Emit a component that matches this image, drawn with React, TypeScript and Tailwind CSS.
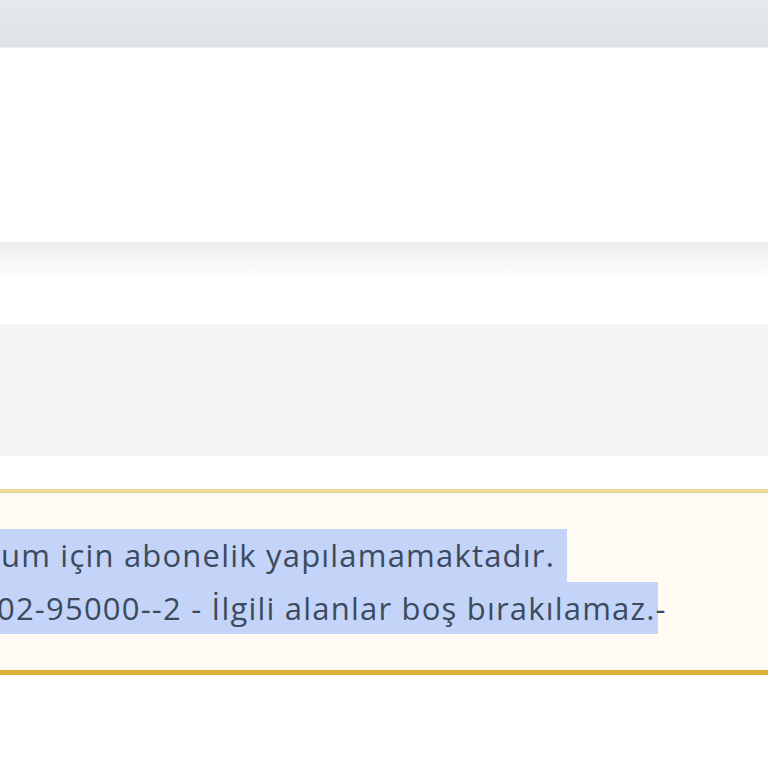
export default function App() {
  return (
    <div className="w-[768px] h-[768px] overflow-hidden bg-white flex flex-col" style={{ fontFamily: '"Open Sans", "Noto Sans", sans-serif' }}>
      {/* top bar */}
      <div className="h-[48px] shrink-0 bg-gradient-to-b from-[#e6e9ec] to-[#dee2e5] border-b border-[#eceef0]" />

      {/* white panel */}
      <div className="h-[194px] shrink-0 bg-white" />

      {/* shadow band */}
      <div className="h-[38px] shrink-0 bg-gradient-to-b from-[#ebebeb] via-[#f7f7f7] to-white" />
      <div className="h-[44px] shrink-0 bg-white" />

      {/* grey strip */}
      <div className="h-[132px] shrink-0 bg-[#f3f4f6] border-t border-[#f8f9fb]" />
      <div className="h-[33px] shrink-0 bg-white" />

      {/* alert */}
      <div className="shrink-0 bg-[#fffbf2] border-t-[3px] border-b-[5px] border-t-[#f1dc8e] border-b-[#dfb13a] shadow-[0_1px_0_#c9c2ac]">
        <div className="h-[1px] bg-[#d9cfa2]" />
        <div className="pt-[36px] pb-[36px] text-[31px] leading-[52.5px] text-[#3c4a5d] tracking-[1.2px]">
          <div className="w-[567px] bg-[#c3d4f8] whitespace-nowrap pl-[1px]">um için abonelik yapılamamaktadır.</div>
          <div className="w-[658px] bg-[#c3d4f8] whitespace-nowrap">
            <span className="ml-[-3px]">02-95000--2 - İlgili alanlar boş bırakılamaz.-</span>
          </div>
        </div>
      </div>
      <div className="flex-1 bg-white" />
    </div>
  );
}
